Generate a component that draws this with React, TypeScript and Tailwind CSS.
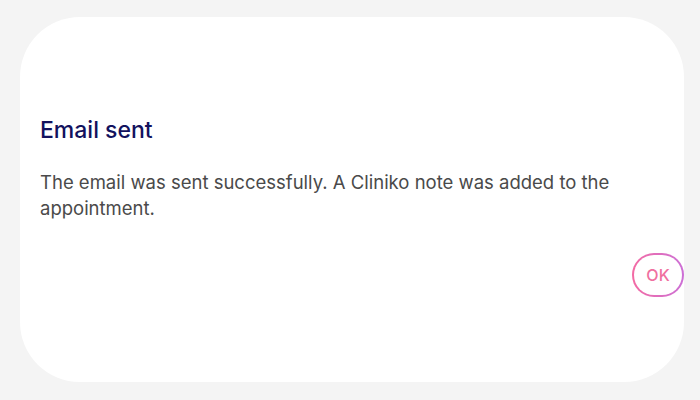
export default function App() {
  return (
    <div className="w-[700px] h-[400px] bg-[#f4f4f4] pt-[17px] pl-[20px]" style={{ fontFamily: "Inter, 'Noto Sans', sans-serif" }}>
      <div className="w-[664px] h-[365px] bg-white rounded-[60px] flex flex-col px-[20px] pt-[97px]">
        <h2 className="text-[23px] leading-[32px] font-medium text-[#12125e]">Email sent</h2>
        <p className="mt-[23px] text-[18.5px] leading-[26px] text-[#4a4a4a] w-[600px]">
          The email was sent successfully. A Cliniko note was added to the appointment.
        </p>
        <div className="flex justify-end mt-[32px] -mr-[20px]">
          <div className="rounded-full p-[2px] bg-gradient-to-r from-[#f36aa3] to-[#cc6fd6]">
            <button className="h-[40px] w-[48px] rounded-full bg-white text-[#f0709f] text-[16px] font-medium">OK</button>
          </div>
        </div>
      </div>
    </div>
  );
}
